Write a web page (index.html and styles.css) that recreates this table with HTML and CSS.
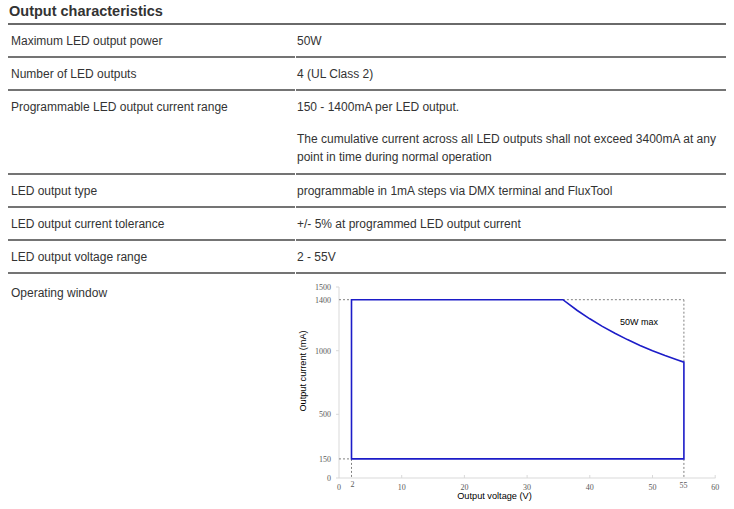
FILE: index.html
```html
<!DOCTYPE html>
<html lang="en">
<head>
<meta charset="utf-8">
<title>Output characteristics</title>
<link rel="stylesheet" href="styles.css">
</head>
<body>
<h2 class="title">Output characteristics</h2>
<div class="spec">
  <div class="cell key">Maximum LED output power</div>
  <div class="cell val">50W</div>

  <div class="cell key">Number of LED outputs</div>
  <div class="cell val">4 (UL Class 2)</div>

  <div class="cell key">Programmable LED output current range</div>
  <div class="cell val">
    <p class="para">150 - 1400mA per LED output.</p>
    <p class="para para-next">The cumulative current across all LED outputs shall not exceed 3400mA at any point in time during normal operation</p>
  </div>

  <div class="cell key">LED output type</div>
  <div class="cell val">programmable in 1mA steps via DMX terminal and FluxTool</div>

  <div class="cell key">LED output current tolerance</div>
  <div class="cell val">+/- 5% at programmed LED output current</div>

  <div class="cell key">LED output voltage range</div>
  <div class="cell val">2 - 55V</div>

  <div class="cell key last last-key">Operating window</div>
  <div class="cell val last chart-cell">
    <svg class="chart" width="430" height="230" viewBox="296 274 430 230" xmlns="http://www.w3.org/2000/svg">
      <g class="axis">
        <line x1="339" y1="287" x2="339" y2="478"/>
        <line x1="339" y1="478" x2="715.5" y2="478"/>
        <line x1="336" y1="287" x2="339" y2="287"/>
        <line x1="336" y1="350.7" x2="339" y2="350.7"/>
        <line x1="336" y1="414.3" x2="339" y2="414.3"/>
        <line x1="336" y1="478" x2="339" y2="478"/>
        <line x1="401.7" y1="475" x2="401.7" y2="478"/>
        <line x1="464.4" y1="475" x2="464.4" y2="478"/>
        <line x1="527.1" y1="475" x2="527.1" y2="478"/>
        <line x1="589.8" y1="475" x2="589.8" y2="478"/>
        <line x1="652.5" y1="475" x2="652.5" y2="478"/>
        <line x1="715.2" y1="475" x2="715.2" y2="478"/>
      </g>
      <g class="guide">
        <line x1="339" y1="299.7" x2="351.5" y2="299.7"/>
        <line x1="562.9" y1="299.7" x2="683.9" y2="299.7"/>
        <line x1="683.9" y1="299.7" x2="683.9" y2="362.2"/>
        <line x1="339" y1="458.9" x2="351.5" y2="458.9"/>
        <line x1="351.5" y1="458.9" x2="351.5" y2="478"/>
        <line x1="683.9" y1="458.9" x2="683.9" y2="478"/>
      </g>
      <path class="window" d="M351.5 458.9 V299.7 H562.9 L577.3 310.5 L589.8 318.8 L602.3 326.4 L614.9 333.3 L627.4 339.6 L640 345.4 L652.5 350.7 L665 355.6 L677.6 360.1 L683.9 362.2 V458.9 Z"/>
      <g class="tick ylab">
        <text x="331" y="289.5">1500</text>
        <text x="331" y="302.5">1400</text>
        <text x="331" y="353.5">1000</text>
        <text x="331" y="417">500</text>
        <text x="331" y="461.5">150</text>
        <text x="331" y="480.5">0</text>
      </g>
      <g class="tick xlab">
        <text x="339" y="490">0</text>
        <text x="352.5" y="486.5">2</text>
        <text x="401.7" y="490">10</text>
        <text x="464.4" y="490">20</text>
        <text x="527.1" y="490">30</text>
        <text x="589.8" y="490">40</text>
        <text x="652.5" y="490">50</text>
        <text x="683.5" y="488">55</text>
        <text x="715.2" y="490">60</text>
      </g>
      <text class="axis-title" x="494.5" y="499" text-anchor="middle">Output voltage (V)</text>
      <text class="axis-title" transform="translate(306 371) rotate(-90)" text-anchor="middle">Output current (mA)</text>
      <text class="note" x="620" y="325">50W max</text>
    </svg>
  </div>
</div>
</body>
</html>
```

FILE: styles.css
```css
html, body {
  background: #ffffff;
}

body {
  margin: 0 8px;
  font-family: "Liberation Sans", Arial, sans-serif;
  font-size: 12px;
  line-height: 18px;
  color: #333333;
}

.title {
  margin: 0;
  padding: 2px 0 3px 1px;
  font-size: 14.5px;
  line-height: 18px;
  font-weight: bold;
  color: #333333;
  border-bottom: 2px solid #6a6a6a;
}

.spec {
  display: grid;
  grid-template-columns: 287px 1fr;
  column-gap: 1px;
}

.cell {
  padding: 7px 0 6px;
  border-bottom: 2px solid #747474;
}

.key {
  padding-left: 3px;
}

.val {
  padding-left: 1px;
}

.para {
  margin: 0;
}

.para-next {
  margin: 14px 0 1px;
}

.last {
  border-bottom: none;
}

.last-key {
  padding-top: 10px;
}

.chart-cell {
  padding: 0;
}

.chart {
  display: block;
}

.axis line {
  stroke: #d9d9d9;
  stroke-width: 1;
}

.guide line {
  stroke: #808080;
  stroke-width: 1;
  stroke-dasharray: 2 2;
}

.window {
  fill: none;
  stroke: #1c1cc8;
  stroke-width: 1.6;
  stroke-linejoin: miter;
}

.tick text {
  font-family: "Liberation Serif", "Times New Roman", serif;
  font-size: 8px;
  fill: #595959;
}

.ylab text {
  text-anchor: end;
}

.xlab text {
  text-anchor: middle;
}

.axis-title {
  font-family: "Liberation Sans", Arial, sans-serif;
  font-size: 9.2px;
  fill: #000000;
}

.note {
  font-family: "Liberation Sans", Arial, sans-serif;
  font-size: 9px;
  fill: #000000;
}
```
